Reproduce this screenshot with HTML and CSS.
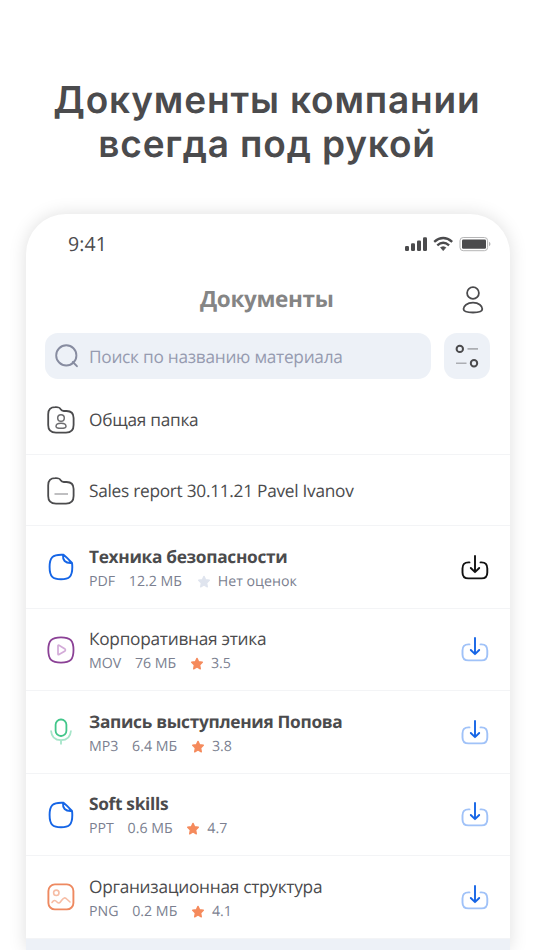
FILE: index.html
```html
<!DOCTYPE html>
<html lang="ru">
<head>
<meta charset="utf-8">
<title>Документы</title>
<link rel="stylesheet" href="styles.css">
</head>
<body>
<svg class="defs" width="0" height="0" aria-hidden="true">
  <symbol id="folder" viewBox="0 0 28 28"><path d="M1.200 9V8.200Q1.200 1.200 8.200 1.200C12 1 12.700 1.500 13.700 3.300Q14.700 5 16.800 5H19.500Q26.600 5 26.600 12V19Q26.600 26.600 19 26.600H9Q1.200 26.600 1.200 19Z" fill="none" stroke="#4b4b4d" stroke-width="1.8"/></symbol>
  <symbol id="doc" viewBox="0 0 28 28"><path d="M14.300 1.700C6 1.700 2.600 4 2.600 14S6 26.300 14 26.300S25.300 24 25.300 14Q25.300 11.500 25 10Q20 4.500 16.500 1.800Z M16 1.700C15.600 6.800 17.800 10.600 25 10" fill="none" stroke="#1565e6" stroke-width="1.900" stroke-linejoin="round"/></symbol>
  <symbol id="star" viewBox="0 0 14 14"><path d="M7 1.400 8.600 4.800 12.300 5.300 9.600 7.900 10.300 11.800 7 10 3.700 11.800 4.400 7.900 1.700 5.300 5.400 4.800Z" fill="currentColor" stroke="currentColor" stroke-width="1.400" stroke-linejoin="round"/></symbol>
  <symbol id="load" viewBox="0 0 28 28"><g fill="none" stroke-width="1.900" stroke-linecap="round" stroke-linejoin="round"><path class="tray" d="M8.500 8.400H7.500Q1.500 8.400 1.500 14.500V18.500Q1.500 24.400 7.500 24.400H20.500Q26.300 24.400 26.300 18.500V14.500Q26.300 8.400 20.500 8.400H19.500"/><path class="arrow" d="M14 1.900V18M9.800 14 14 18.200 18.200 14"/></g></symbol>
</svg>
<h1 class="headline"><span class="line1">Документы компании</span><br><span class="line2">всегда под рукой</span></h1>
<main class="phone">
  <div class="status">
    <span class="time">9:41</span>
    <svg class="signals" width="87" height="16" viewBox="0 0 87 16">
      <g fill="#4b4b4d"><rect x="1" y="10" width="4" height="5" rx="1.200"/><rect x="7" y="7.300" width="4" height="7.700" rx="1.200"/><rect x="13" y="4.400" width="4" height="10.600" rx="1.200"/><rect x="19" y="1.200" width="4" height="13.800" rx="1.200"/>
      <path d="M36.600 11.500Q39.200 9.800 41.800 11.500L39.200 14.600Z" stroke="#4b4b4d" stroke-width=".8" stroke-linejoin="round"/><rect x="58" y="3.400" width="24" height="9.400" rx="1.300"/></g>
      <g fill="none" stroke="#4b4b4d" stroke-width="2.400"><path d="M30.200 5.900Q39.200-1.700 48.200 5.900"/><path d="M33.300 9.400Q39.200 4.300 45.100 9.400"/></g>
      <rect x="56" y="1.500" width="27.600" height="13.200" rx="3.200" fill="none" stroke="#b5b5b6"/><path d="M85 5.800Q88 8 85 10.300Z" fill="#b5b5b6"/>
    </svg>
  </div>
  <header class="bar">
    <h2>Документы</h2>
    <svg class="profile" width="22" height="28" viewBox="0 0 22 28" fill="none" stroke="#4b4b4d" stroke-width="1.800"><circle cx="11" cy="7" r="5.900"/><path d="M11 16.600C17 16.600 20.300 20 20.300 23Q20.300 26.500 11 26.500T1.500 23C1.500 20 5 16.600 11 16.600Z"/></svg>
  </header>
  <div class="tools">
    <div class="search">
      <svg width="24" height="24" viewBox="0 0 24 24" fill="none" stroke="#878ca0" stroke-width="1.900" stroke-linecap="round"><circle cx="11.300" cy="11.400" r="10.100"/><path d="m17.800 18 4.100 4.200"/></svg>
      <span>Поиск по названию материала</span>
    </div>
    <div class="filter"><svg width="24" height="24" viewBox="0 0 24 24" fill="none" stroke="#4b4b4d" stroke-width="2"><circle cx="4.800" cy="4.900" r="3.200"/><circle cx="19" cy="19.200" r="3.200"/><path d="M12.500 4.900H23M1 19.200H11.500" stroke="#acaeb3" stroke-width="1.600"/></svg></div>
  </div>
  <div class="row folder">
    <svg class="kind" viewBox="0 0 28 28"><use href="#folder"/><g fill="none" stroke="#6d6d70" stroke-width="1.500"><circle cx="14" cy="12" r="3.300"/><path d="M14 17.300C17.500 17.300 19 19 19 20.400Q19 22.200 14 22.200T9 20.400C9 19 10.500 17.300 14 17.300Z"/></g></svg>
    <div class="name">Общая папка</div>
  </div>
  <div class="row folder">
    <svg class="kind" viewBox="0 0 28 28"><use href="#folder"/><path d="M7.500 17H21" stroke="#b0b0b2" stroke-width="1.600"/></svg>
    <div class="name">Sales report 30.11.21 Pavel Ivanov</div>
  </div>
  <div class="row">
    <svg class="kind"><use href="#doc"/></svg>
    <div class="info"><div class="name bold">Техника безопасности</div><div class="meta"><span>PDF</span><span>12.2 МБ</span><span class="rate none"><svg class="star"><use href="#star"/></svg>Нет оценок</span></div></div>
    <svg class="load dark"><use href="#load"/></svg>
  </div>
  <div class="row">
    <svg class="kind" viewBox="0 0 28 28" fill="none"><path d="M14 1.300C23.500 1.300 26.500 4.500 26.500 14S23.500 26.600 14 26.600 1.300 23.500 1.300 14 4.500 1.300 14 1.300Z" stroke="#8b4196" stroke-width="1.800"/><path d="M11 9.800Q11 8.900 12 9.300L18 13Q19 14 18 15L12 18.600Q11 19 11 18Z" stroke="#d3abd8" stroke-width="1.700"/></svg>
    <div class="info"><div class="name">Корпоративная этика</div><div class="meta"><span>MOV</span><span>76 МБ</span><span class="rate"><svg class="star"><use href="#star"/></svg>3.5</span></div></div>
    <svg class="load"><use href="#load"/></svg>
  </div>
  <div class="row">
    <svg class="kind" viewBox="0 0 28 28" fill="none" stroke-width="1.800"><rect x="8.600" y="1.500" width="10.800" height="16.500" rx="5.200" stroke="#42c68a"/><path d="M4 12.500C4.500 19.500 8 22.200 14 22.200S23.500 19.500 24 12.500M14 22.200V26.500" stroke="#a6e5c9"/></svg>
    <div class="info"><div class="name bold">Запись выступления Попова</div><div class="meta"><span>MP3</span><span>6.4 МБ</span><span class="rate"><svg class="star"><use href="#star"/></svg>3.8</span></div></div>
    <svg class="load"><use href="#load"/></svg>
  </div>
  <div class="row">
    <svg class="kind"><use href="#doc"/></svg>
    <div class="info"><div class="name bold">Soft skills</div><div class="meta"><span>PPT</span><span>0.6 МБ</span><span class="rate"><svg class="star"><use href="#star"/></svg>4.7</span></div></div>
    <svg class="load"><use href="#load"/></svg>
  </div>
  <div class="row">
    <svg class="kind" viewBox="0 0 28 28" fill="none"><rect x="1.400" y="1.400" width="25" height="25" rx="6.500" stroke="#ee8960" stroke-width="1.900"/><g stroke="#f6bda5" stroke-width="1.600" stroke-linecap="round"><circle cx="9.300" cy="9.800" r="2.700"/><path d="M5 19.500C7 16.500 8.500 17.500 10 19S12.500 20.500 14.500 17.500 18 14 20 16.300L23 19"/></g></svg>
    <div class="info"><div class="name">Организационная структура</div><div class="meta"><span>PNG</span><span>0.2 МБ</span><span class="rate"><svg class="star"><use href="#star"/></svg>4.1</span></div></div>
    <svg class="load"><use href="#load"/></svg>
  </div>
  <div class="bottom"></div>
</main>
</body>
</html>
```
FILE: styles.css
```css
* { box-sizing: border-box; }
html, body { margin: 0; height: 950px; overflow: hidden; background: #fff; }
body { font-family: "Open Sans", "Noto Sans", sans-serif; color: #4b4b4d; text-rendering: geometricPrecision; }
.defs { display: block; }
.headline { margin: 0; padding-top: 78px; height: 214px; font: 600 37px/44px Inter, sans-serif; text-align: center; white-space: nowrap; color: #4b4b4d; }
.line1 { letter-spacing: .85px; }
.line2 { letter-spacing: .85px; }
.phone { margin: 0 24.5px 0 26px; height: 736px; display: flex; flex-direction: column; background: #fff; border-radius: 40px 40px 0 0; box-shadow: 0 0 18px rgba(0,0,0,.13); }
.phone > * { flex: none; }
.status { height: 60px; display: flex; justify-content: space-between; align-items: center; padding: 0 19px 0 42px; }
.time { font-size: 19.500px; font-weight: 500; letter-spacing: .1px; line-height: 24px; }
.bar { height: 59px; padding: 0 25px 8px 174px; display: flex; justify-content: space-between; align-items: center; }
.bar h2 { margin: -2px 0 0; font-size: 22.500px; font-weight: 700; letter-spacing: -.35px; line-height: 30px; color: #858585; }
.profile { margin-right: 1px; }
.tools { display: flex; gap: 13px; padding: 0 19.500px 0 19px; height: 51px; }
.search { width: 386px; height: 46px; border-radius: 13px; background: #edf1f7; display: flex; align-items: center; gap: 10px; padding-left: 10px; font-size: 17.300px; letter-spacing: -.28px; color: #969bb0; white-space: nowrap; }
.search span { padding-top: 2px; }
.filter { width: 46px; height: 46px; border-radius: 13px; background: #edf1f7; display: flex; align-items: center; justify-content: center; }
.row { height: 82.500px; border-bottom: 1px solid #f3f4f6; display: flex; align-items: center; padding: 0 21px; }
.row.folder { height: 71px; }
.folder .name { padding-top: 3px; }
.kind { width: 28px; height: 28px; margin: 1px 14px 0 0; flex: none; }
.name { font-size: 17.300px; letter-spacing: -.28px; line-height: 24px; white-space: nowrap; }
.bold { font-weight: 700; letter-spacing: -.31px; }
.info { flex: 1; padding-top: 5px; }
.meta { display: flex; gap: 13.700px; margin-top: 1px; font-size: 14.200px; line-height: 22px; color: #7b7f90; white-space: nowrap; }
.rate { display: flex; align-items: center; }
.star { width: 14px; height: 14px; margin-right: 7px; color: #f58a5c; }
.none .star { color: #dfe4ee; margin-left: 1px; }
.load { width: 28px; height: 28px; margin-top: 2px; --tray: #a0c2f8; --arrow: #1565e6; }
.load.dark { --tray: #111; --arrow: #111; }
.tray { stroke: var(--tray); }
.arrow { stroke: var(--arrow); }
.phone > .bottom { flex: 1; background: #edf1f7; }
```
